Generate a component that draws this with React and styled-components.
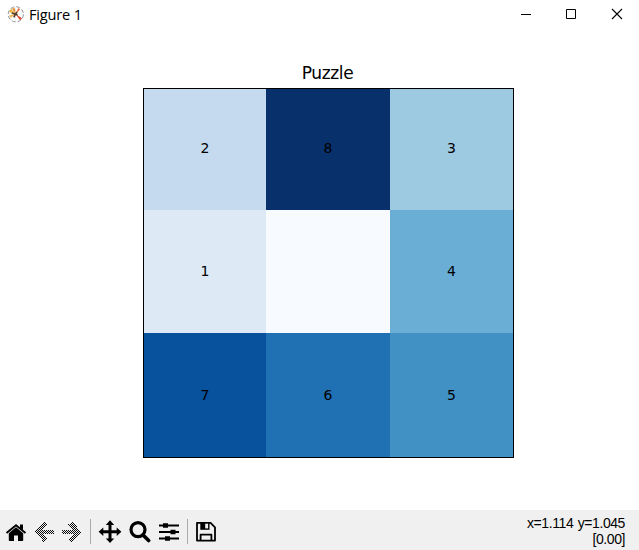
import React from 'react';
import styled, { createGlobalStyle } from 'styled-components';

const GlobalStyle = createGlobalStyle`
  * { box-sizing: border-box; }
  html, body { margin: 0; padding: 0; background: #fff; overflow: hidden; }
`;

const Window = styled.div`
  width: 639px;
  height: 550px;
  display: flex;
  flex-direction: column;
  background: #fff;
  color: #000;
`;

const TitleBar = styled.header`
  height: 30px;
  display: flex;
  align-items: flex-start;
  padding-left: 7px;
  flex: none;
`;

const AppIcon = styled.svg`
  width: 17px;
  height: 17px;
  margin-top: 6px;
  flex: none;
`;

const WindowTitle = styled.span`
  margin: 4px auto 0 5px;
  font: 14.6px/20px 'Open Sans', 'Noto Sans', sans-serif;
  letter-spacing: -0.2px;
  white-space: nowrap;
`;

const WindowButton = styled.button`
  width: 46px;
  height: 28px;
  padding: 8px 0 0;
  border: 0;
  background: transparent;
  display: flex;
  align-items: flex-start;
  justify-content: center;
  svg { display: block; }
`;

const WindowControls = styled.div`
  display: flex;
  margin-right: -1px;
`;

const Figure = styled.main`
  flex: 1;
  display: flex;
  flex-direction: column;
  align-items: flex-start;
  padding-left: 143px;
`;

const PlotTitle = styled.h1`
  width: 369px;
  height: 20px;
  margin: 33px 0 5px;
  font: 400 17px/20px 'DejaVu Sans', sans-serif;
  letter-spacing: -0.35px;
  text-align: center;
`;

const Grid = styled.div`
  width: 371px;
  height: 370px;
  border: 1px solid #000;
  display: grid;
  grid-template-columns: 122px 124px 123px;
  grid-template-rows: 121px 123px 124px;
`;

const Cell = styled.div`
  display: flex;
  align-items: center;
  justify-content: center;
  padding-bottom: ${(p) => p.$lift}px;
  background: ${(p) => p.$fill};
  font: 14px/20px 'DejaVu Sans', sans-serif;
`;

const Toolbar = styled.footer`
  height: 40px;
  flex: none;
  display: flex;
  align-items: flex-start;
  background: #f0f0f0;
  padding: 9px 14px 0 4px;
`;

const Tool = styled.button`
  width: 24px;
  height: 24px;
  margin-left: ${(p) => p.$gap || 0}px;
  padding: 0;
  border: 0;
  background: transparent;
  svg { display: block; }
`;

const Separator = styled.i`
  width: 1px;
  height: 25px;
  margin-left: ${(p) => p.$gap}px;
  background: #a9a9a9;
`;

const Status = styled.div`
  margin: -4px 0 0 auto;
  text-align: right;
  font: 14px/16px 'Liberation Sans', Arial, sans-serif;
  letter-spacing: -0.42px;
  word-spacing: 1px;
  white-space: nowrap;
`;

const cells = [
  ['2', '#c5daee'], ['8', '#08306b'], ['3', '#9dcae1'],
  ['1', '#dde9f5'], ['', '#f7fbff'], ['4', '#6aaed6'],
  ['7', '#08519c'], ['6', '#2070b4'], ['5', '#4191c5'],
];
const rowLift = [4, 2, 0];

const Icon = ({ children }) => (
  <svg width="24" height="24" viewBox="0 0 24 24">{children}</svg>
);

const Arrow = ({ id, d }) => (
  <Icon>
    <defs>
      <pattern id={id} width="2" height="2" patternUnits="userSpaceOnUse">
        <path d="M0 0h1v1H0zM1 1h1v1H1z" fill="#080808" shapeRendering="crispEdges" />
      </pattern>
    </defs>
    <path d={d} fill={`url(#${id})`} shapeRendering="crispEdges" />
  </Icon>
);

export default function App() {
  return (
    <>
      <GlobalStyle />
      <Window>
        <TitleBar>
          <AppIcon viewBox="0 0 17 17">
            <circle cx="8.8" cy="8.3" r="7.6" fill="#fff" stroke="#858b90" strokeWidth=".9" strokeDasharray="4 2" />
            <path d="M1.5 8h14M8.5 1v14M3.5 3l10 10M3.5 13l10-10" stroke="#d9dfe2" strokeWidth=".5" />
            <path d="M8.5 8L4 2.8 2 6z" fill="#efb43c" />
            <path d="M8.5 8L4.8 2.2 8 2.6z" fill="#e58b32" />
            <path d="M8.5 8l2.8-6 1.8 1.4z" fill="#ef6a35" />
            <path d="M8.5 8l6.6 4.2-2.1 2z" fill="#d94b2d" />
            <path d="M8.5 8L2 9.4l1.6 2.3z" fill="#f1b545" />
            <path d="M7.8 8l-3-1M8.5 8l-1.7 3.4M8.3 8l1.8-2M8.5 8l2 1" stroke="#533b28" strokeWidth="1.6" />
          </AppIcon>
          <WindowTitle>Figure 1</WindowTitle>
          <WindowControls>
            <WindowButton aria-label="Minimize">
              <svg width="12" height="12"><path d="M2 6.5h10" stroke="#000" /></svg>
            </WindowButton>
            <WindowButton aria-label="Maximize">
              <svg width="12" height="12"><path d="M1.5 1.5h9v9h-9z" fill="none" stroke="#000" /></svg>
            </WindowButton>
            <WindowButton aria-label="Close">
              <svg width="12" height="12"><path d="M1 1l10 10M11 1L1 11" stroke="#000" strokeWidth="1.1" /></svg>
            </WindowButton>
          </WindowControls>
        </TitleBar>
        <Figure>
          <PlotTitle>Puzzle</PlotTitle>
          <Grid>
            {cells.map(([label, fill], i) => (
              <Cell key={i} $fill={fill} $lift={rowLift[Math.floor(i / 3)]}>{label}</Cell>
            ))}
          </Grid>
        </Figure>
        <Toolbar>
          <Tool aria-label="Home">
            <Icon>
              <path d="M12 8.2L4.8 14.2V21c0 .6.4 1 1 1H10v-5.5h4V22h4.2c.6 0 1-.4 1-1v-6.8z" />
              <path d="M2.5 14L12 6.2l9.5 7.8" fill="none" stroke="#000" strokeWidth="1.9" />
              <path d="M16 5.6h3v6l-3-2.5z" />
            </Icon>
          </Tool>
          <Tool aria-label="Back" $gap={5}>
            <Arrow id="back-fill" d="M11 2.5l3.5 3-4.7 5H21v4.6H9.8l4.7 5-3.5 3L1.5 13z" />
          </Tool>
          <Tool aria-label="Forward" $gap={2}>
            <Arrow id="forward-fill" d="M13 2.5l-3.5 3 4.7 5H3v4.6h11.2l-4.7 5 3.5 3 9.5-10.1z" />
          </Tool>
          <Separator $gap={7} />
          <Tool aria-label="Pan" $gap={7}>
            <Icon>
              <path d="M12 1.2l4.2 4.9h-2.7v5.2h5.2V8.6l4.7 4.2-4.7 4.2v-2.8h-5.2v5.3h2.7L12 24l-4.2-4.5h2.7v-5.3H5.3V17L.6 12.8l4.7-4.2v2.7h5.2V6.1H7.8z" />
            </Icon>
          </Tool>
          <Tool aria-label="Zoom" $gap={6}>
            <Icon>
              <circle cx="10" cy="10.6" r="7" fill="none" stroke="#000" strokeWidth="3.2" />
              <path d="M15 16l5.6 5.6" stroke="#000" strokeWidth="3.6" strokeLinecap="round" />
            </Icon>
          </Tool>
          <Tool aria-label="Subplots" $gap={5}>
            <Icon>
              <path d="M2 6.5h20M2 13h20M2 19.5h20" stroke="#000" strokeWidth="1.8" />
              <path d="M6 4.2h5v4.6H6zM13.5 10.7h5v4.6h-5zM8 17.2h5v4.6H8z" />
            </Icon>
          </Tool>
          <Separator $gap={6} />
          <Tool aria-label="Save" $gap={6}>
            <Icon>
              <path d="M3 3.9h13.6L21 8.3v13.3H3zM6.6 21.5v-5.8h10.8v5.8" fill="none" stroke="#000" strokeWidth="1.8" strokeLinejoin="round" />
              <path d="M6.3 3.5h9.2v7.3H6.3z" />
              <path d="M11.2 4.7h2.9v4.7h-2.9z" fill="#f0f0f0" />
            </Icon>
          </Tool>
          <Status>x=1.114 y=1.045<br />[0.00]</Status>
        </Toolbar>
      </Window>
    </>
  );
}
